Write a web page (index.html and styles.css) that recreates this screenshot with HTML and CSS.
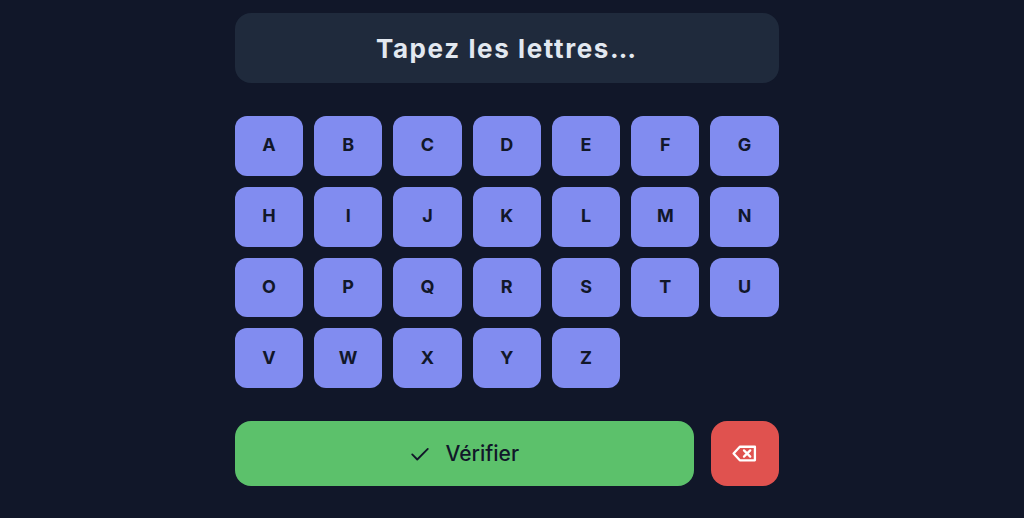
FILE: index.html
```html
<!DOCTYPE html>
<html lang="fr">
<head>
    <meta charset="UTF-8">
    <title>Tapez les lettres</title>
    <link rel="stylesheet" href="styles.css">
</head>
<body>
    <div class="game">
        <div class="answer">Tapez les lettres…</div>

        <div class="keyboard">
            <button class="key">A</button>
            <button class="key">B</button>
            <button class="key">C</button>
            <button class="key">D</button>
            <button class="key">E</button>
            <button class="key">F</button>
            <button class="key">G</button>
            <button class="key">H</button>
            <button class="key">I</button>
            <button class="key">J</button>
            <button class="key">K</button>
            <button class="key">L</button>
            <button class="key">M</button>
            <button class="key">N</button>
            <button class="key">O</button>
            <button class="key">P</button>
            <button class="key">Q</button>
            <button class="key">R</button>
            <button class="key">S</button>
            <button class="key">T</button>
            <button class="key">U</button>
            <button class="key">V</button>
            <button class="key">W</button>
            <button class="key">X</button>
            <button class="key">Y</button>
            <button class="key">Z</button>
        </div>

        <div class="actions">
            <button class="check-btn">
                <svg class="check-icon" viewBox="0 0 24 24" fill="none" stroke="currentColor" stroke-width="2" stroke-linecap="round" stroke-linejoin="round">
                    <path d="M3.500 12.500l5.500 5.500L20.500 6.500"/>
                </svg>
                Vérifier
            </button>
            <button class="delete-btn">
                <svg class="delete-icon" viewBox="0 0 24 24" fill="none" stroke="currentColor" stroke-width="2.200" stroke-linejoin="round" stroke-linecap="round">
                    <path d="M7.500 5.500H22v13H7.500L1.500 12z"/>
                    <path d="M11.500 9l6 6M17.500 9l-6 6"/>
                </svg>
            </button>
        </div>
    </div>
</body>
</html>
```

FILE: styles.css
```css
body {
    margin: 0;
    height: 518px;
    padding-right: 10.500px;
    overflow: hidden;
    background-color: #111729;
    font-family: 'Inter', 'Liberation Sans', sans-serif;
    color: #111729;
}

button {
    border: none;
    padding: 0;
    font-family: inherit;
    color: inherit;
    cursor: pointer;
}

.game {
    width: 544px;
    margin: 0 auto;
    padding-top: 13px;
    display: flex;
    flex-direction: column;
    gap: 33px;
}

.answer {
    height: 70px;
    display: flex;
    align-items: center;
    justify-content: center;
    border-radius: 16px;
    background-color: #1f2a3c;
    color: #e2e8f0;
    font-size: 26px;
    font-weight: 700;
    letter-spacing: 1.600px;
}

.keyboard {
    display: grid;
    grid-template-columns: repeat(7, 1fr);
    grid-auto-rows: 59.750px;
    gap: 11px;
}

.key {
    padding-bottom: 2px;
    border-radius: 12px;
    background-color: #818cf0;
    font-size: 18px;
    font-weight: 700;
}

.actions {
    display: flex;
    gap: 17px;
    height: 65px;
}

.check-btn {
    flex: 1;
    display: flex;
    align-items: center;
    justify-content: center;
    gap: 14px;
    border-radius: 16px;
    background-color: #5cc16b;
    font-size: 21px;
    font-weight: 500;
}

.check-icon {
    width: 22px;
    height: 22px;
}

.delete-btn {
    width: 68px;
    display: flex;
    align-items: center;
    justify-content: center;
    border-radius: 16px;
    background-color: #e0524f;
    color: #fff;
}

.delete-icon {
    width: 25px;
    height: 25px;
}
```
